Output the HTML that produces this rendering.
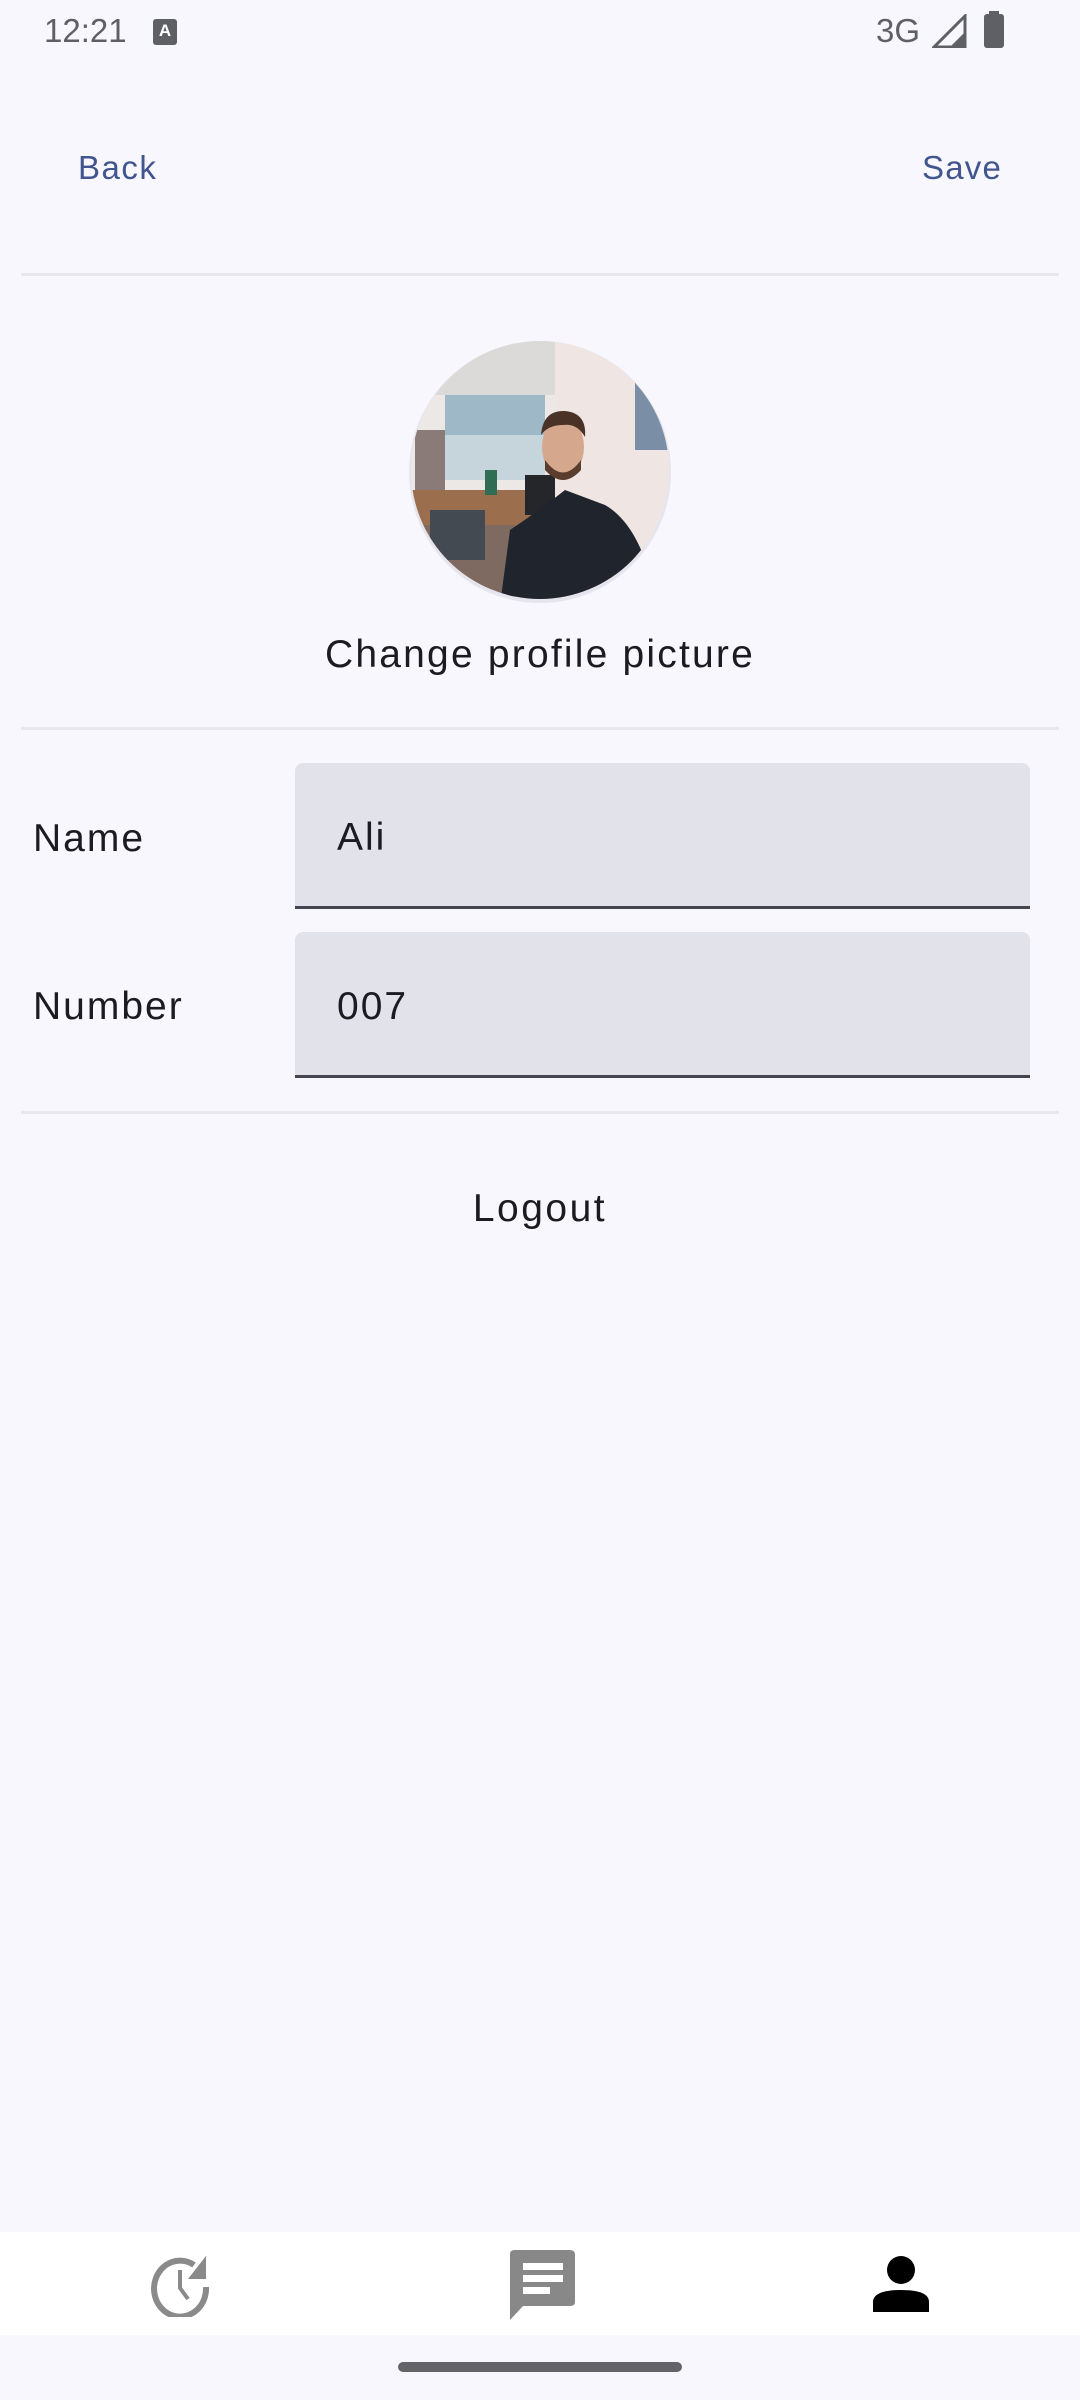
<!DOCTYPE html>
<html><head><meta charset="utf-8"><style>
*{margin:0;padding:0;box-sizing:border-box}
body{width:1080px;height:2400px;background:#f8f7fd;font-family:"Liberation Sans",sans-serif;position:relative;overflow:hidden;color:#1b1b21}
.a{position:absolute}
.div{position:absolute;left:21px;width:1038px;height:3px;background:#e8e7ee}
.lbl{position:absolute;left:33px;font-size:39px;letter-spacing:2px}
.inp{position:absolute;left:295px;width:735px;height:146px;background:#e2e2ea;border-radius:8px 8px 0 0;border-bottom:3px solid #45454f}
.inp span{position:absolute;left:42px;top:53px;font-size:39px;letter-spacing:2px}
</style></head><body>
<div class="a" style="left:44px;top:12px;font-size:33px;color:#5f5f66">12:21</div>
<div class="a" style="left:153px;top:19px;width:24px;height:26px;background:#5f5f66;border-radius:3px;color:#fff;font-size:17px;font-weight:bold;text-align:center;line-height:24px">A</div>
<div class="a" style="left:876px;top:12px;font-size:33px;color:#5f5f66">3G</div>
<svg class="a" style="left:932px;top:14px" width="36" height="34"><path d="M2 33 L33 2 L33 33 Z" fill="none" stroke="#5f5f66" stroke-width="3"/><path d="M18 33 L33 18 L33 33Z" fill="#5f5f66"/></svg>
<div class="a" style="left:984px;top:14px;width:20px;height:34px;background:#5f5f66;border-radius:3px"></div>
<div class="a" style="left:989px;top:11px;width:10px;height:5px;background:#5f5f66"></div>
<div class="a" style="left:78px;top:149px;font-size:33px;color:#41568f;letter-spacing:1.5px">Back</div>
<div class="a" style="left:922px;top:149px;font-size:33px;color:#41568f;letter-spacing:1.2px">Save</div>
<div class="div" style="top:273px"></div>
<svg class="a" style="left:405px;top:335px" width="270" height="270">
<defs><clipPath id="c"><circle cx="135" cy="135" r="129"/></clipPath></defs>
<circle cx="135" cy="137" r="131" fill="#e6e5ee"/>
<g clip-path="url(#c)">
<rect width="270" height="270" fill="#ece8e6"/>
<rect x="0" y="0" width="150" height="60" fill="#dcdad8"/>
<rect x="150" y="0" width="120" height="270" fill="#efe6e4"/>
<rect x="40" y="60" width="100" height="85" fill="#9fb8c8"/>
<rect x="40" y="100" width="100" height="45" fill="#c6d4dc"/>
<rect x="230" y="40" width="45" height="75" fill="#7a8fa6"/>
<rect x="10" y="95" width="30" height="70" fill="#8a7a78"/>
<rect x="0" y="155" width="130" height="40" fill="#9b6e4e"/>
<rect x="0" y="190" width="110" height="80" fill="#7e6a60"/>
<rect x="25" y="175" width="55" height="50" fill="#444a52"/>
<rect x="80" y="135" width="12" height="25" fill="#2f6d55"/>
<rect x="120" y="140" width="30" height="40" fill="#25262a"/>
<path d="M95 270 L105 195 Q135 175 160 155 L200 170 Q235 190 250 260 L250 270 Z" fill="#20242c"/>
<ellipse cx="158" cy="112" rx="21" ry="30" fill="#d5a88e"/>
<path d="M136 100 Q138 75 160 76 Q182 78 180 102 Q172 88 158 90 Q143 90 136 100Z" fill="#4a3326"/>
<path d="M140 125 Q158 150 176 125 L176 135 Q158 155 140 135Z" fill="#5a3d2d"/>
</g>
</svg>
<div class="a" style="left:0;width:1080px;top:633px;text-align:center;font-size:39px;letter-spacing:2.2px">Change profile picture</div>
<div class="div" style="top:727px"></div>
<div class="lbl" style="top:817px">Name</div>
<div class="inp" style="top:763px"><span>Ali</span></div>
<div class="lbl" style="top:985px">Number</div>
<div class="inp" style="top:932px"><span>007</span></div>
<div class="div" style="top:1111px"></div>
<div class="a" style="left:0;width:1080px;top:1187px;text-align:center;font-size:39px;letter-spacing:2.5px">Logout</div>
<div class="a" style="left:0;top:2232px;width:1080px;height:103px;background:#fff"></div>
<svg class="a" style="left:148px;top:2253px" width="64" height="64" viewBox="0 0 64 64">
<path d="M46 12 A26 28 0 1 0 58 34" fill="none" stroke="#8a8a8a" stroke-width="6"/>
<path d="M40 26 L58 26 L58 3Z" fill="#8a8a8a"/>
<path d="M32 17 L32 35 L40 46" fill="none" stroke="#8a8a8a" stroke-width="4"/>
</svg>
<svg class="a" style="left:505px;top:2250px" width="72" height="72" viewBox="0 0 72 72">
<path d="M5 4 Q5 0 10 0 L65 0 Q70 0 70 5 L70 52 Q70 56 65 56 L18 56 L5 70Z" fill="#888"/>
<rect x="18" y="13" width="40" height="7" fill="#fff"/><rect x="18" y="25" width="40" height="7" fill="#fff"/><rect x="18" y="37" width="27" height="7" fill="#fff"/>
</svg>
<svg class="a" style="left:872px;top:2256px" width="58" height="58" viewBox="0 0 58 58">
<ellipse cx="29" cy="14" rx="14" ry="14" fill="#000"/>
<path d="M1 56 L1 46 Q1 34 29 34 Q57 34 57 46 L57 56Z" fill="#000"/>
</svg>
<div class="a" style="left:398px;top:2362px;width:284px;height:10px;border-radius:5px;background:#646468"></div>
</body></html>
